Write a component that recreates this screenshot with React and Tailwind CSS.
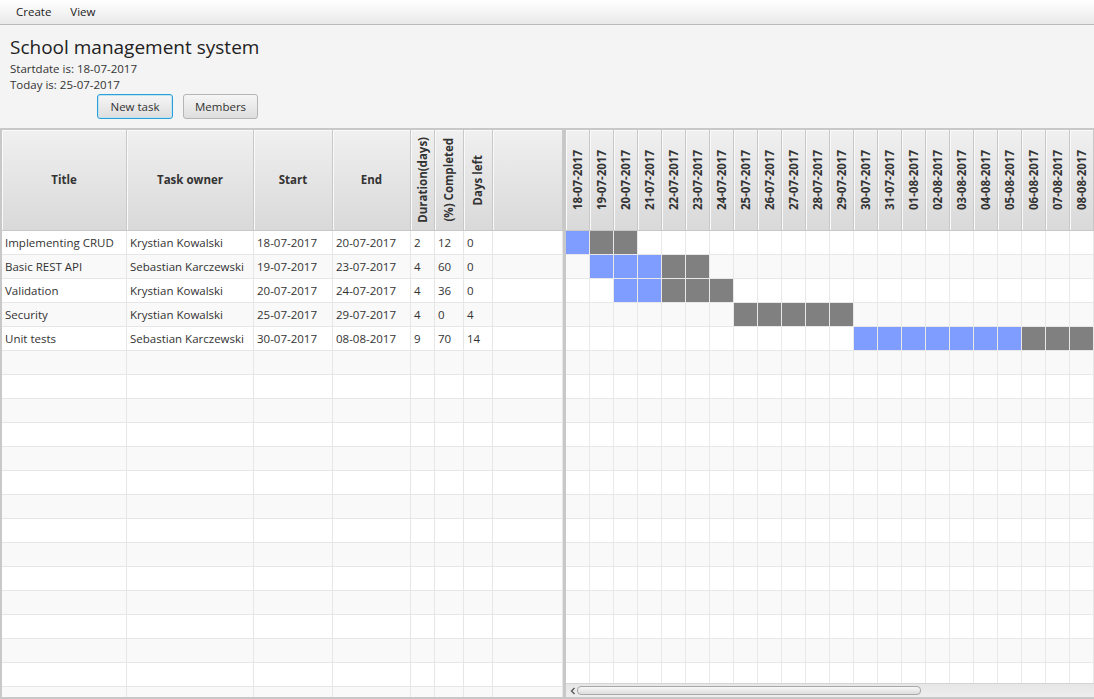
const tasks = [
  { title: "Implementing CRUD", owner: "Krystian Kowalski", start: "18-07-2017", end: "20-07-2017", dur: 2, done: 12, left: 0, blue: [0, 0], gray: [1, 2] },
  { title: "Basic REST API", owner: "Sebastian Karczewski", start: "19-07-2017", end: "23-07-2017", dur: 4, done: 60, left: 0, blue: [1, 3], gray: [4, 5] },
  { title: "Validation", owner: "Krystian Kowalski", start: "20-07-2017", end: "24-07-2017", dur: 4, done: 36, left: 0, blue: [2, 3], gray: [4, 6] },
  { title: "Security", owner: "Krystian Kowalski", start: "25-07-2017", end: "29-07-2017", dur: 4, done: 0, left: 4, blue: null, gray: [7, 11] },
  { title: "Unit tests", owner: "Sebastian Karczewski", start: "30-07-2017", end: "08-08-2017", dur: 9, done: 70, left: 14, blue: [12, 18], gray: [19, 21] },
];

const days = [];
for (let d = 18; d <= 31; d++) days.push(`${d}-07-2017`);
for (let d = 1; d <= 8; d++) days.push(`0${d}-08-2017`);

const cols = [
  { label: "Title", w: "w-[125px]" },
  { label: "Task owner", w: "w-[127px]" },
  { label: "Start", w: "w-[79px]" },
  { label: "End", w: "w-[78px]" },
  { label: "Duration(days)", w: "w-[24px]", vertical: true },
  { label: "(%) Completed", w: "w-[29px]", vertical: true },
  { label: "Days left", w: "w-[29px]", vertical: true },
  { label: "", w: "flex-1" },
];

const ROWS = 20;

const headCell =
  "h-full shrink-0 flex items-center justify-center border-r border-[#c8c8c8] bg-linear-to-b from-[#f0f0f0] to-[#d9d9d9] shadow-[inset_1px_1px_0_#fafafa] font-bold text-[#333]";

function VText({ children }) {
  return <span className="[writing-mode:vertical-rl] rotate-180 whitespace-nowrap leading-none">{children}</span>;
}

function LeftTable() {
  return (
    <div className="w-[563px] shrink-0 flex flex-col border-l-2 border-b-2 border-[#c8c8c8] overflow-hidden">
      <div className="h-[101px] shrink-0 flex border-b border-[#c8c8c8]">
        {cols.map((c, i) => (
          <div key={i} className={`${headCell} ${c.w}`}>
            {c.vertical ? <VText>{c.label}</VText> : c.label}
          </div>
        ))}
      </div>
      <div className="flex-1 overflow-hidden">
        {Array.from({ length: ROWS }).map((_, r) => {
          const t = tasks[r];
          const vals = t ? [t.title, t.owner, t.start, t.end, t.dur, t.done, t.left, ""] : cols.map(() => "");
          return (
            <div key={r} className={`h-[24px] flex border-b border-[#e6e6e6] ${r % 2 ? "bg-[#f9f9f9]" : "bg-white"}`}>
              {cols.map((c, i) => (
                <div key={i} className={`${c.w} shrink-0 h-full flex items-center pl-[3px] border-r border-[#e6e6e6] whitespace-nowrap overflow-hidden text-[#333]`}>
                  {vals[i]}
                </div>
              ))}
            </div>
          );
        })}
      </div>
    </div>
  );
}

function cellColor(t, i) {
  if (!t) return "";
  if (t.blue && i >= t.blue[0] && i <= t.blue[1]) return "bg-[#7f9cff]";
  if (t.gray && i >= t.gray[0] && i <= t.gray[1]) return "bg-[#808080]";
  return "";
}

function Gantt() {
  return (
    <div className="flex-1 flex flex-col overflow-hidden border-b-2 border-[#c8c8c8]">
      <div className="h-[101px] shrink-0 flex border-b border-[#c8c8c8]">
        {days.map((d) => (
          <div key={d} className={`${headCell} w-[24px]`}>
            <VText>{d}</VText>
          </div>
        ))}
      </div>
      <div className="flex-1 overflow-hidden">
        {Array.from({ length: ROWS }).map((_, r) => {
          const t = tasks[r];
          return (
            <div key={r} className={`h-[24px] flex border-b border-[#e8e8e8] ${r % 2 ? "bg-[#f9f9f9]" : "bg-white"}`}>
              {days.map((d, i) => (
                <div key={d} className={`w-[24px] shrink-0 h-full border-r border-[#e8e8e8] ${cellColor(t, i)}`} />
              ))}
            </div>
          );
        })}
      </div>
      <div className="h-[14px] shrink-0 flex items-center border-t border-[#d4d4d4] bg-linear-to-b from-[#e6e6e6] to-[#eeeeee]">
        <svg width="11" height="10" viewBox="0 0 11 10" className="ml-[2px]">
          <path d="M6.5 2 L3.5 5 L6.5 8" fill="none" stroke="#555" strokeWidth="1.3" />
        </svg>
        <div className="ml-[-2px] w-[344px] h-[9px] rounded-[4px] border border-[#a8a8a8] bg-linear-to-b from-[#f7f7f7] to-[#dddddd]" />
      </div>
    </div>
  );
}

export default function App() {
  return (
    <div className="w-[1094px] h-[699px] overflow-hidden bg-[#f4f4f4] flex flex-col font-['Open_Sans',sans-serif] text-[11.5px] text-[#333]">
      <div className="h-[25px] shrink-0 flex items-center gap-[19px] pl-[16px] border-b border-[#b9b9b9] bg-linear-to-b from-white to-[#e9e9e9] text-[#222]">
        <span>Create</span>
        <span>View</span>
      </div>
      <div className="h-[103px] shrink-0 px-[10px] pt-[10px]">
        <div className="text-[19px] leading-[24px] text-[#222]">School management system</div>
        <div className="leading-[16px] mt-[2px]">Startdate is: 18-07-2017</div>
        <div className="leading-[16px]">Today is: 25-07-2017</div>
        <div className="flex gap-[10px] ml-[87px] mt-[1px]">
          <button className="w-[76px] h-[25px] rounded-[3px] border border-[#2c9fd6] bg-linear-to-b from-[#f6f6f6] to-[#dedede] shadow-[inset_0_0_0_1px_#bfe3f3] text-[#333]">
            New task
          </button>
          <button className="w-[75px] h-[25px] rounded-[3px] border border-[#b5b5b5] bg-linear-to-b from-[#f6f6f6] to-[#dedede] text-[#333]">
            Members
          </button>
        </div>
      </div>
      <div className="flex-1 flex border-t-2 border-[#c8c8c8] overflow-hidden">
        <LeftTable />
        <div className="w-[3px] shrink-0 bg-[#c8c8c8]" />
        <Gantt />
      </div>
    </div>
  );
}
